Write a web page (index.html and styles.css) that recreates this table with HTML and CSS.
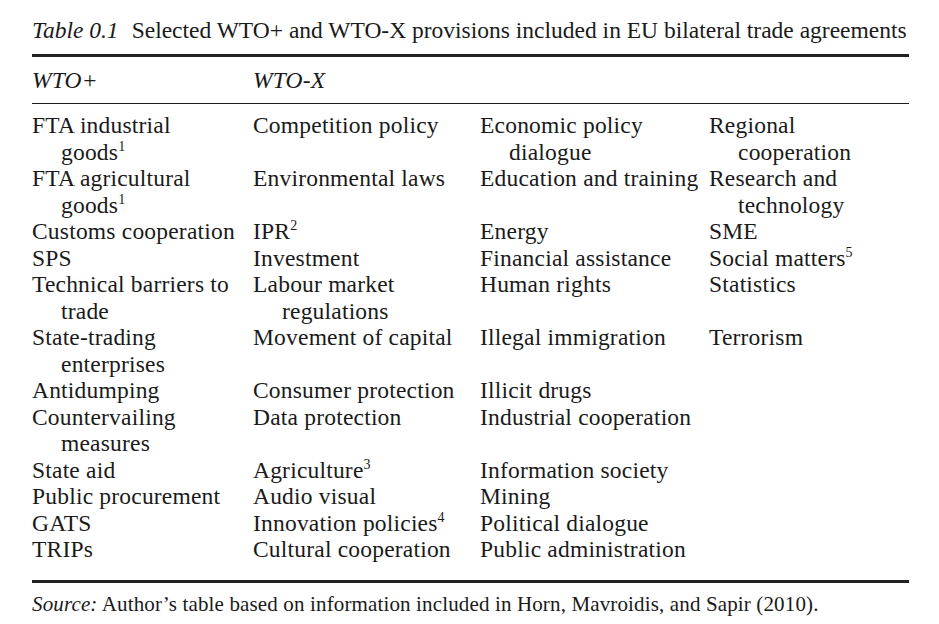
FILE: index.html
```html
<!DOCTYPE html>
<html>
<head>
<meta charset="utf-8">
<link rel="stylesheet" href="styles.css">
</head>
<body>
<div class="page">
  <div class="caption"><span class="label">Table 0.1</span><span class="title">Selected WTO+ and WTO-X provisions included in EU bilateral trade agreements</span></div>
  <div class="rule-thick"></div>
  <div class="head">
    <div class="hcell">WTO+</div>
    <div class="hcell">WTO-X</div>
    <div class="hcell"></div>
    <div class="hcell"></div>
  </div>
  <div class="rule-thin"></div>
  <div class="grid">
    <div class="c">FTA industrial<br>goods<sup>1</sup></div>
    <div class="c">Competition policy</div>
    <div class="c">Economic policy<br>dialogue</div>
    <div class="c">Regional<br>cooperation</div>

    <div class="c">FTA agricultural<br>goods<sup>1</sup></div>
    <div class="c">Environmental laws</div>
    <div class="c">Education and training</div>
    <div class="c">Research and<br>technology</div>

    <div class="c">Customs cooperation</div>
    <div class="c">IPR<sup>2</sup></div>
    <div class="c">Energy</div>
    <div class="c">SME</div>

    <div class="c">SPS</div>
    <div class="c">Investment</div>
    <div class="c">Financial assistance</div>
    <div class="c">Social matters<sup>5</sup></div>

    <div class="c">Technical barriers to<br>trade</div>
    <div class="c">Labour market<br>regulations</div>
    <div class="c">Human rights</div>
    <div class="c">Statistics</div>

    <div class="c">State-trading<br>enterprises</div>
    <div class="c">Movement of capital</div>
    <div class="c">Illegal immigration</div>
    <div class="c">Terrorism</div>

    <div class="c">Antidumping</div>
    <div class="c">Consumer protection</div>
    <div class="c">Illicit drugs</div>
    <div class="c"></div>

    <div class="c">Countervailing<br>measures</div>
    <div class="c">Data protection</div>
    <div class="c">Industrial cooperation</div>
    <div class="c"></div>

    <div class="c">State aid</div>
    <div class="c">Agriculture<sup>3</sup></div>
    <div class="c">Information society</div>
    <div class="c"></div>

    <div class="c">Public procurement</div>
    <div class="c">Audio visual</div>
    <div class="c">Mining</div>
    <div class="c"></div>

    <div class="c">GATS</div>
    <div class="c">Innovation policies<sup>4</sup></div>
    <div class="c">Political dialogue</div>
    <div class="c"></div>

    <div class="c">TRIPs</div>
    <div class="c">Cultural cooperation</div>
    <div class="c">Public administration</div>
    <div class="c"></div>
  </div>
  <div class="rule-thick bottom"></div>
  <div class="source"><span class="label">Source:</span> Author’s table based on information included in Horn, Mavroidis, and Sapir (2010).</div>
</div>
</body>
</html>
```

FILE: styles.css
```css
html, body {
  margin: 0;
  padding: 0;
  background: #ffffff;
}

body {
  font-family: "Liberation Serif", "Times New Roman", serif;
  color: #1a1a1a;
  font-size: 23.5px;
  line-height: 26.5px;
}

.page {
  width: 877px;
  padding: 17px 0 0 32px;
}

.caption {
  display: flex;
  white-space: nowrap;
}

.caption .label {
  font-style: italic;
  margin-right: 13px;
}

.rule-thick {
  height: 3px;
  background: #222222;
  margin-top: 10px;
}

.head {
  display: grid;
  grid-template-columns: 221px 227px 229px 200px;
  margin-top: 10px;
  font-style: italic;
  letter-spacing: 0.2px;
}

.rule-thin {
  height: 1px;
  background: #1c1c1c;
  margin-top: 10px;
}

.grid {
  display: grid;
  grid-template-columns: 221px 227px 229px 200px;
  margin-top: 8px;
  letter-spacing: 0.2px;
}

.c {
  white-space: nowrap;
  padding-left: 29px;
  text-indent: -29px;
}

sup {
  font-size: 14px;
  line-height: 0;
  vertical-align: 0;
  position: relative;
  top: -9px;
  letter-spacing: 0;
}

.rule-thick.bottom {
  margin-top: 17px;
}

.source {
  margin-top: 8px;
  font-size: 21px;
  line-height: 26px;
  letter-spacing: 0.14px;
  white-space: nowrap;
}

.source .label {
  font-style: italic;
}
```
